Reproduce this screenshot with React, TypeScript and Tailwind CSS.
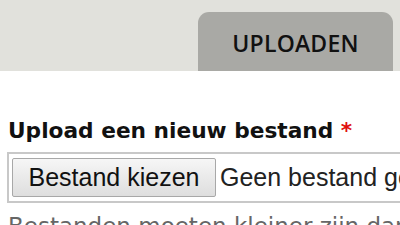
export default function App() {
  return (
    <div className="w-[400px] h-[225px] overflow-hidden bg-white">
      <div className="h-[71px] bg-[#e1e1dc] flex items-end pl-[198px]">
        <div className="w-[195px] h-[59px] bg-[#a9a9a5] rounded-t-[11px] flex justify-center pt-[17px]">
          <span className="font-['Open_Sans',sans-serif] font-semibold text-[23px] leading-[28px] text-[#111] tracking-[0.2px]">
            UPLOADEN
          </span>
        </div>
      </div>
      <div className="pl-[7px] pt-[47px]">
        <label className="block pl-[1px] font-['DejaVu_Sans',sans-serif] font-bold text-[21.7px] leading-[26px] text-[#111] whitespace-nowrap">
          Upload een nieuw bestand <span className="text-[#e01010]">*</span>
        </label>
        <div className="mt-[8px] w-[430px] border-2 border-[#c8c8c8] pl-[3px] py-[4px] flex items-center whitespace-nowrap font-['Liberation_Sans',Arial,sans-serif]">
          <div className="shrink-0 h-[39px] w-[204px] flex items-center justify-center border border-[#a8a8a8] rounded-[2px] bg-gradient-to-b from-[#f6f6f6] to-[#dedede] text-[25px] text-[#111]">
            Bestand kiezen
          </div>
          <span className="shrink-0 ml-[4px] text-[25px] text-[#222]">Geen bestand gekozen</span>
        </div>
        <p className="mt-[10px] pl-[1px] font-['DejaVu_Sans',sans-serif] text-[23px] leading-[26px] text-[#666] whitespace-nowrap">
          Bestanden moeten kleiner zijn dan 2 MB.
        </p>
      </div>
    </div>
  );
}
